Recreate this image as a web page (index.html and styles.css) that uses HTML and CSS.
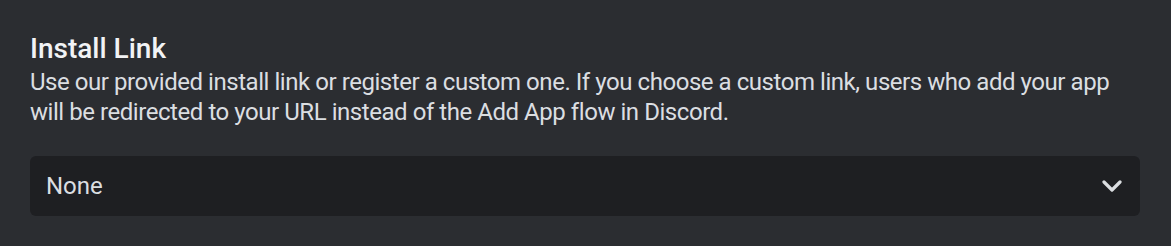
FILE: index.html
```html
<!DOCTYPE html>
<html lang="en">
<head>
    <meta charset="UTF-8">
    <meta name="viewport" content="width=device-width, initial-scale=1.0">
    <title>Install Link</title>
    <link rel="stylesheet" href="styles.css">
</head>
<body>
    <section class="install-link">
        <h2 class="install-link-title">Install Link</h2>
        <p class="install-link-desc">Use our provided install link or register a custom one. If you choose a custom link, users who add your app will be redirected to your URL instead of the Add App flow in Discord.</p>
        <div class="select">
            <span class="select-value">None</span>
            <svg class="select-arrow" width="20" height="12" viewBox="0 0 20 12">
                <polyline points="2,2 10,10 18,2" fill="none" stroke="currentColor" stroke-width="3.2" stroke-linecap="round" stroke-linejoin="round"/>
            </svg>
        </div>
    </section>
</body>
</html>
```

FILE: styles.css
```css
body {
    margin: 0;
    background-color: #2b2d31;
    font-family: Roboto, "Noto Sans", sans-serif;
    color: #dbdee1;
}
.install-link {
    padding: 31px 31px 0 30px;
}
.install-link-title {
    margin: 0;
    font-size: 28px;
    font-weight: 500;
    line-height: 36px;
    color: #f2f3f5;
}
.install-link-desc {
    margin: 0 0 29px;
    font-size: 24px;
    line-height: 30px;
    letter-spacing: -0.45px;
    color: #dbdee1;
}
.select {
    display: flex;
    align-items: center;
    justify-content: space-between;
    height: 60px;
    padding: 0 18px 0 16px;
    background-color: #1e1f22;
    border-radius: 6px;
}
.select-value {
    font-size: 24px;
    color: #dbdee1;
}
.select-arrow {
    color: #dbdee1;
}
```
